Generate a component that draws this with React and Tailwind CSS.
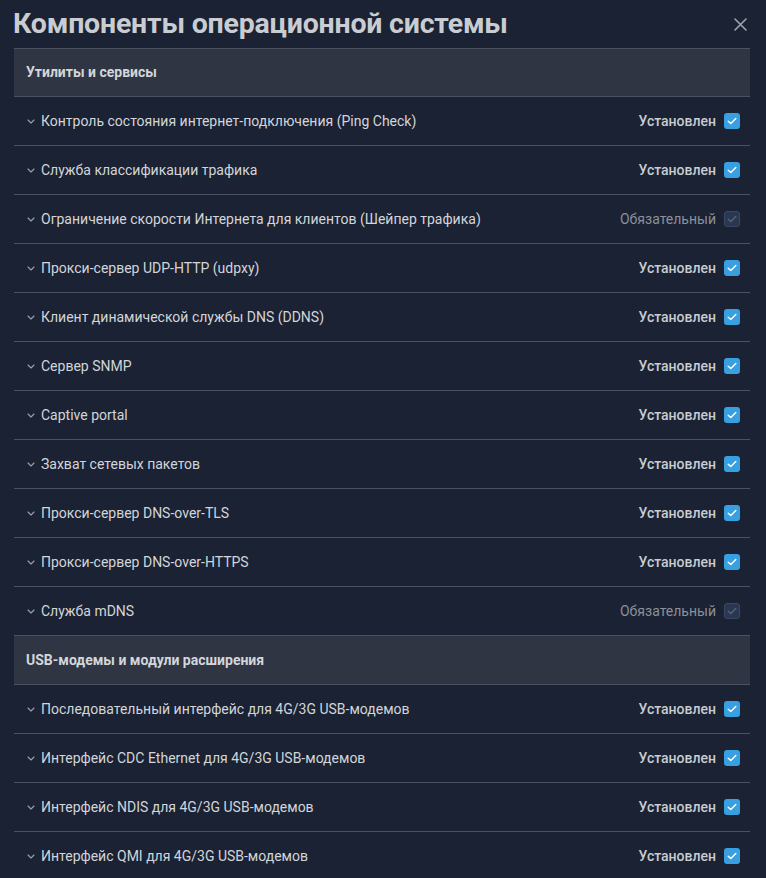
import React from 'react';

const sections = [
  {
    title: 'Утилиты и сервисы',
    items: [
      { name: 'Контроль состояния интернет-подключения (Ping Check)' },
      { name: 'Служба классификации трафика' },
      { name: 'Ограничение скорости Интернета для клиентов (Шейпер трафика)', required: true },
      { name: 'Прокси-сервер UDP-HTTP (udpxy)' },
      { name: 'Клиент динамической службы DNS (DDNS)' },
      { name: 'Сервер SNMP' },
      { name: 'Captive portal' },
      { name: 'Захват сетевых пакетов' },
      { name: 'Прокси-сервер DNS-over-TLS' },
      { name: 'Прокси-сервер DNS-over-HTTPS' },
      { name: 'Служба mDNS', required: true },
    ],
  },
  {
    title: 'USB-модемы и модули расширения',
    items: [
      { name: 'Последовательный интерфейс для 4G/3G USB-модемов' },
      { name: 'Интерфейс CDC Ethernet для 4G/3G USB-модемов' },
      { name: 'Интерфейс NDIS для 4G/3G USB-модемов' },
      { name: 'Интерфейс QMI для 4G/3G USB-модемов' },
    ],
  },
];

const Check = ({ disabled }) => (
  <span
    className={
      disabled
        ? 'w-4 h-4 rounded-[3px] bg-[#2a3752] border border-[#3a4763] flex items-center justify-center'
        : 'w-4 h-4 rounded-[3px] bg-[#389fe0] flex items-center justify-center'
    }
  >
    <svg width="10" height="8" viewBox="0 0 10 8" fill="none">
      <path
        d="M1.2 4.2 L3.8 6.6 L8.8 1.4"
        stroke={disabled ? '#56627a' : '#ffffff'}
        strokeWidth="1.4"
        strokeLinecap="round"
        strokeLinejoin="round"
      />
    </svg>
  </span>
);

const Row = ({ item, last }) => (
  <div
    className={`flex items-center pl-[12px] pr-[10px] ${
      last ? 'h-[48px]' : 'h-[49px] border-b border-[#4a5160]'
    }`}
  >
    <svg width="8" height="5" viewBox="0 0 8 5" className="ml-[1px] mr-[6px] mt-[1px]" fill="none">
      <path d="M1 1 L4 4 L7 1" stroke="#9ca2ad" strokeWidth="1.1" strokeLinecap="round" strokeLinejoin="round" />
    </svg>
    <span className="flex-1 text-[14px] text-[#d2d5da] truncate">{item.name}</span>
    {item.required ? (
      <span className="text-[14px] text-[#8b9099] mr-[8px]">Обязательный</span>
    ) : (
      <span className="text-[14px] font-medium text-[#c9ccd1] mr-[8px]">Установлен</span>
    )}
    <Check disabled={item.required} />
  </div>
);

export default function App() {
  return (
    <div
      className="w-[766px] h-[878px] overflow-hidden bg-[#1b2233]"
      style={{ fontFamily: 'Roboto, "Liberation Sans", sans-serif' }}
    >
      <div className="h-[48px] flex items-center justify-between pl-[13px] pr-[19px]">
        <h1 className="text-[28.5px] font-bold text-[#c9ccd1] leading-none tracking-[-0.2px]">
          Компоненты операционной системы
        </h1>
        <svg width="13" height="13" viewBox="0 0 13 13" fill="none">
          <path d="M1 1 L12 12 M12 1 L1 12" stroke="#9fa4ac" strokeWidth="1.6" strokeLinecap="round" />
        </svg>
      </div>
      <div className="ml-[14px] mr-[16px]">
        {sections.map((s, si) => (
          <div key={s.title}>
            <div
              className={`${si === 0 ? 'h-[49px]' : 'h-[50px]'} flex items-center px-[12px] bg-[#2f3542] border-y border-[#4a5160]`}
            >
              <span className="text-[14px] font-bold text-[#d3d6db]">{s.title}</span>
            </div>
            {s.items.map((it, i) => (
              <Row key={it.name} item={it} last={i === s.items.length - 1 && si !== sections.length - 1} />
            ))}
          </div>
        ))}
      </div>
    </div>
  );
}
